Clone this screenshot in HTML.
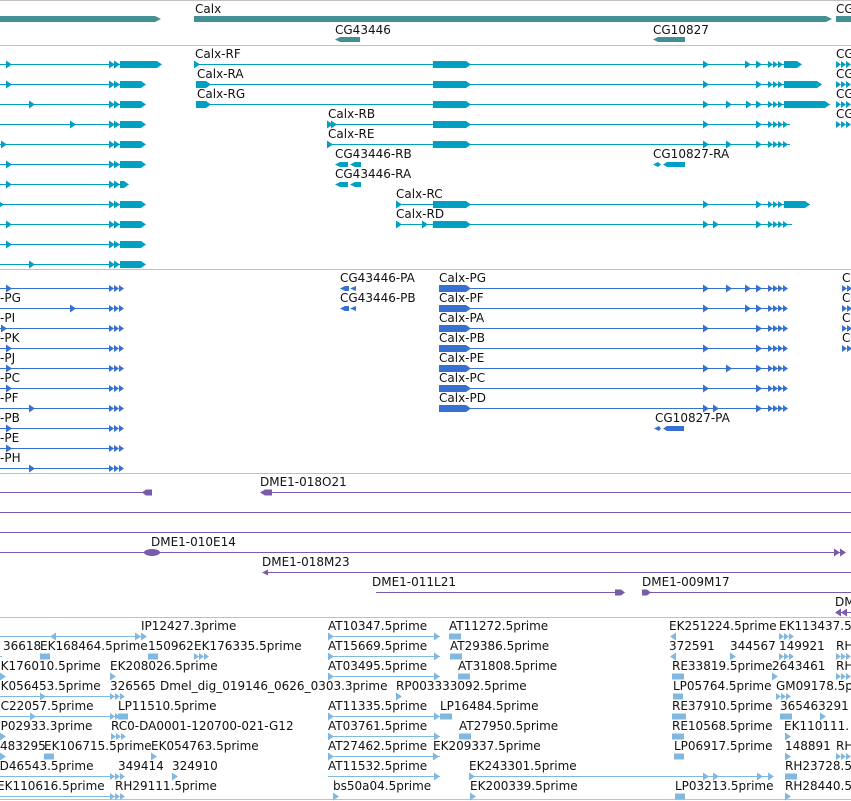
<!DOCTYPE html>
<html><head><meta charset="utf-8"><style>
html,body{margin:0;padding:0;background:#fff;width:851px;height:801px;overflow:hidden}
svg{display:block}
text{font-family:"DejaVu Sans","Liberation Sans",sans-serif;font-size:12px;fill:#111}
</style></head><body>
<svg width="851" height="801" xmlns="http://www.w3.org/2000/svg">
<defs>
<polygon id="ar" points="0,-4 6,0 0,4"/>
<polygon id="al" points="0,-4 -6,0 0,4"/>
<g id="a3"><polygon points="0,-3.5 5,0 0,3.5"/><polygon points="5,-3.5 10,0 5,3.5"/><polygon points="10,-3.5 15,0 10,3.5"/></g>
<g id="a4"><polygon points="0,-3.5 5,0 0,3.5"/><polygon points="5,-3.5 10,0 5,3.5"/><polygon points="10,-3.5 15,0 10,3.5"/><polygon points="15,-3.5 20,0 15,3.5"/></g>
</defs>
<!-- separators -->
<g stroke="#c0c0c0" stroke-width="1">
<line x1="0" y1="0.5" x2="851" y2="0.5"/><line x1="0" y1="45.5" x2="851" y2="45.5"/>
<line x1="0" y1="269.5" x2="851" y2="269.5"/><line x1="0" y1="473.5" x2="851" y2="473.5"/>
<line x1="0" y1="617.5" x2="851" y2="617.5"/><line x1="0" y1="799.5" x2="851" y2="799.5"/>
</g>

<!-- Track 1 genes -->
<g fill="#428f94">
<polygon points="0,16 155,16 161,19 155,22 0,22"/>
<polygon points="194,16 826,16 832,19 826,22 194,22"/>
<rect x="836" y="16" width="15" height="6"/>
<polygon points="335,39.5 340,37 360,37 360,42 340,42"/>
<polygon points="653,39.5 658,37 685,37 685,42 658,42"/>
</g>
<text x="195" y="13">Calx</text><text x="836" y="13">CG</text>
<text x="335" y="34">CG43446</text><text x="653" y="34">CG10827</text>

<!-- Track 2 transcripts -->
<g fill="#00a0c2" stroke="#00a0c2">
<g stroke-width="1">
<line x1="0" y1="64.5" x2="120" y2="64.5"/><line x1="0" y1="84.5" x2="120" y2="84.5"/>
<line x1="0" y1="104.5" x2="120" y2="104.5"/><line x1="0" y1="124.5" x2="120" y2="124.5"/>
<line x1="0" y1="144.5" x2="120" y2="144.5"/><line x1="0" y1="164.5" x2="120" y2="164.5"/>
<line x1="0" y1="184.5" x2="120" y2="184.5"/><line x1="0" y1="204.5" x2="120" y2="204.5"/>
<line x1="0" y1="224.5" x2="120" y2="224.5"/><line x1="0" y1="244.5" x2="120" y2="244.5"/>
<line x1="0" y1="264.5" x2="120" y2="264.5"/>
<line x1="194" y1="64.5" x2="800" y2="64.5"/><line x1="196" y1="84.5" x2="820" y2="84.5"/>
<line x1="196" y1="104.5" x2="830" y2="104.5"/><line x1="327" y1="124.5" x2="790" y2="124.5"/>
<line x1="327" y1="144.5" x2="790" y2="144.5"/><line x1="396" y1="204.5" x2="810" y2="204.5"/>
<line x1="396" y1="224.5" x2="792" y2="224.5"/>
</g>
<g stroke="none">
<!-- left exons -->
<polygon points="120,61 157,61 162,64.5 157,68 120,68"/>
<polygon points="120,81 141,81 146,84.5 141,88 120,88"/>
<polygon points="120,101 141,101 146,104.5 141,108 120,108"/>
<polygon points="120,121 141,121 146,124.5 141,128 120,128"/>
<polygon points="120,141 141,141 146,144.5 141,148 120,148"/>
<polygon points="120,161 141,161 146,164.5 141,168 120,168"/>
<polygon points="120,181 124,181 129,184.5 124,188 120,188"/>
<polygon points="120,201 141,201 146,204.5 141,208 120,208"/>
<polygon points="120,221 141,221 146,224.5 141,228 120,228"/>
<polygon points="120,241 141,241 146,244.5 141,248 120,248"/>
<polygon points="120,261 141,261 146,264.5 141,268 120,268"/>
<use href="#ar" x="109" y="64.5"/><use href="#ar" x="114" y="64.5"/><use href="#ar" x="109" y="84.5"/><use href="#ar" x="114" y="84.5"/>
<use href="#ar" x="109" y="104.5"/><use href="#ar" x="114" y="104.5"/><use href="#ar" x="109" y="124.5"/><use href="#ar" x="114" y="124.5"/>
<use href="#ar" x="109" y="144.5"/><use href="#ar" x="114" y="144.5"/><use href="#ar" x="109" y="164.5"/><use href="#ar" x="114" y="164.5"/>
<use href="#ar" x="109" y="184.5"/><use href="#ar" x="114" y="184.5"/><use href="#ar" x="109" y="204.5"/><use href="#ar" x="114" y="204.5"/>
<use href="#ar" x="109" y="224.5"/><use href="#ar" x="114" y="224.5"/><use href="#ar" x="109" y="244.5"/><use href="#ar" x="114" y="244.5"/>
<use href="#ar" x="109" y="264.5"/><use href="#ar" x="114" y="264.5"/>
<use href="#ar" x="6" y="64.5"/><use href="#ar" x="6" y="84.5"/><use href="#ar" x="29" y="104.5"/><use href="#ar" x="70" y="124.5"/>
<use href="#ar" x="1" y="144.5"/><use href="#ar" x="6" y="164.5"/><use href="#ar" x="6" y="184.5"/><use href="#ar" x="-2" y="204.5"/>
<use href="#ar" x="6" y="224.5"/><use href="#ar" x="6" y="244.5"/><use href="#ar" x="29" y="264.5"/>
<!-- right transcripts -->
<use href="#ar" x="194" y="64.5"/>
<polygon points="196,81 206,81 211,84.5 206,88 196,88"/><polygon points="196,101 206,101 211,104.5 206,108 196,108"/>
<use href="#ar" x="327" y="124.5"/><use href="#ar" x="331" y="124.5"/><use href="#ar" x="327" y="144.5"/>
<use href="#ar" x="396" y="204.5"/><use href="#ar" x="396" y="224.5"/><use href="#ar" x="422" y="224.5"/>
<polygon points="433,61 466,61 471,64.5 466,68 433,68"/><polygon points="433,81 466,81 471,84.5 466,88 433,88"/>
<polygon points="433,101 466,101 471,104.5 466,108 433,108"/><polygon points="433,121 466,121 471,124.5 466,128 433,128"/>
<polygon points="433,141 466,141 471,144.5 466,148 433,148"/><polygon points="433,201 466,201 471,204.5 466,208 433,208"/>
<polygon points="433,221 466,221 471,224.5 466,228 433,228"/>
<use href="#ar" x="703" y="64.5"/><use href="#ar" x="745" y="64.5"/><use href="#ar" x="756" y="64.5"/><use href="#a3" x="768" y="64.5"/>
<polygon points="784,61 797,61 802,64.5 797,68 784,68"/>
<use href="#ar" x="703" y="84.5"/><use href="#ar" x="756" y="84.5"/><use href="#a3" x="768" y="84.5"/>
<polygon points="784,81 817,81 822,84.5 817,88 784,88"/>
<use href="#ar" x="703" y="104.5"/><use href="#ar" x="726" y="104.5"/><use href="#ar" x="746" y="104.5"/><use href="#ar" x="756" y="104.5"/><use href="#a3" x="768" y="104.5"/>
<polygon points="784,101 825,101 830,104.5 825,108 784,108"/>
<use href="#ar" x="703" y="124.5"/><use href="#ar" x="756" y="124.5"/><use href="#a4" x="768" y="124.5"/>
<use href="#ar" x="703" y="144.5"/><use href="#ar" x="726" y="144.5"/><use href="#ar" x="756" y="144.5"/><use href="#a4" x="768" y="144.5"/>
<use href="#ar" x="703" y="204.5"/><use href="#ar" x="756" y="204.5"/><use href="#a3" x="768" y="204.5"/>
<polygon points="784,201 805,201 810,204.5 805,208 784,208"/>
<use href="#ar" x="703" y="224.5"/><use href="#ar" x="713" y="224.5"/><use href="#ar" x="756" y="224.5"/><use href="#a4" x="768" y="224.5"/>
<!-- CG43446 -->
<polygon points="335,164.5 340,162 348,162 348,167 340,167"/><polygon points="350,164.5 355,162 361,162 361,167 355,167"/>
<polygon points="335,184.5 340,182 348,182 348,187 340,187"/><polygon points="350,184.5 355,182 361,182 361,187 355,187"/>
<polygon points="653,164.5 658,162 661,164.5 658,167"/><polygon points="663,164.5 667,162 685,162 685,167 667,167"/>
<!-- right edge -->
<use href="#a3" x="836" y="64.5"/><use href="#a3" x="836" y="84.5"/><use href="#a3" x="836" y="104.5"/><use href="#a3" x="836" y="124.5"/>
</g>
</g>
<text x="195" y="58">Calx-RF</text><text x="197" y="78">Calx-RA</text><text x="197" y="98">Calx-RG</text>
<text x="328" y="118">Calx-RB</text><text x="328" y="138">Calx-RE</text>
<text x="335" y="158">CG43446-RB</text><text x="335" y="178">CG43446-RA</text><text x="653" y="158">CG10827-RA</text>
<text x="396" y="198">Calx-RC</text><text x="396" y="218">Calx-RD</text>
<text x="836" y="58">CG</text><text x="836" y="78">CG</text><text x="836" y="98">CG</text><text x="836" y="118">CG</text>

<!-- Track 3 proteins -->
<g fill="#3670d0" stroke="#3670d0">
<g stroke-width="1">
<line x1="0" y1="288.5" x2="112" y2="288.5"/><line x1="0" y1="308.5" x2="112" y2="308.5"/>
<line x1="0" y1="328.5" x2="112" y2="328.5"/><line x1="0" y1="348.5" x2="112" y2="348.5"/>
<line x1="0" y1="368.5" x2="112" y2="368.5"/><line x1="0" y1="388.5" x2="112" y2="388.5"/>
<line x1="0" y1="408.5" x2="112" y2="408.5"/><line x1="0" y1="428.5" x2="112" y2="428.5"/>
<line x1="0" y1="448.5" x2="112" y2="448.5"/><line x1="0" y1="468.5" x2="112" y2="468.5"/>
<line x1="439" y1="288.5" x2="786" y2="288.5"/><line x1="439" y1="308.5" x2="786" y2="308.5"/>
<line x1="439" y1="328.5" x2="786" y2="328.5"/><line x1="439" y1="348.5" x2="786" y2="348.5"/>
<line x1="439" y1="368.5" x2="786" y2="368.5"/><line x1="439" y1="388.5" x2="786" y2="388.5"/>
<line x1="439" y1="408.5" x2="786" y2="408.5"/>
</g>
<g stroke="none">
<use href="#a3" x="109" y="288.5"/><use href="#a3" x="109" y="308.5"/><use href="#a3" x="109" y="328.5"/><use href="#a3" x="109" y="348.5"/>
<use href="#a3" x="109" y="368.5"/><use href="#a3" x="109" y="388.5"/><use href="#a3" x="109" y="408.5"/><use href="#a3" x="109" y="428.5"/>
<use href="#a3" x="109" y="448.5"/><use href="#a3" x="109" y="468.5"/>
<use href="#ar" x="6" y="288.5"/><use href="#ar" x="70" y="308.5"/><use href="#ar" x="1" y="328.5"/><use href="#ar" x="6" y="348.5"/>
<use href="#ar" x="6" y="368.5"/><use href="#ar" x="6" y="388.5"/><use href="#ar" x="29" y="408.5"/><use href="#ar" x="6" y="428.5"/>
<use href="#ar" x="6" y="448.5"/><use href="#ar" x="29" y="468.5"/>
<polygon points="340,288.5 345,286 349,286 349,291 345,291"/><polygon points="350,288.5 356,286 356,291"/>
<polygon points="340,308.5 345,306 349,306 349,311 345,311"/><polygon points="350,308.5 356,306 356,311"/>
<polygon points="439,285 466,285 471,288.5 466,292 439,292"/><polygon points="439,305 466,305 471,308.5 466,312 439,312"/>
<polygon points="439,325 466,325 471,328.5 466,332 439,332"/><polygon points="439,345 466,345 471,348.5 466,352 439,352"/>
<polygon points="439,365 466,365 471,368.5 466,372 439,372"/><polygon points="439,385 466,385 471,388.5 466,392 439,392"/>
<polygon points="439,405 466,405 471,408.5 466,412 439,412"/>
<use href="#ar" x="703" y="288.5"/><use href="#ar" x="726" y="288.5"/><use href="#ar" x="745" y="288.5"/><use href="#ar" x="756" y="288.5"/><use href="#a4" x="768" y="288.5"/>
<use href="#ar" x="703" y="308.5"/><use href="#ar" x="745" y="308.5"/><use href="#ar" x="756" y="308.5"/><use href="#a4" x="768" y="308.5"/>
<use href="#ar" x="703" y="328.5"/><use href="#ar" x="756" y="328.5"/><use href="#a4" x="768" y="328.5"/>
<use href="#ar" x="703" y="348.5"/><use href="#ar" x="756" y="348.5"/><use href="#a4" x="768" y="348.5"/>
<use href="#ar" x="703" y="368.5"/><use href="#ar" x="726" y="368.5"/><use href="#ar" x="756" y="368.5"/><use href="#a4" x="768" y="368.5"/>
<use href="#ar" x="703" y="388.5"/><use href="#ar" x="756" y="388.5"/><use href="#a4" x="768" y="388.5"/>
<use href="#ar" x="703" y="408.5"/><use href="#ar" x="713" y="408.5"/><use href="#ar" x="756" y="408.5"/><use href="#a4" x="768" y="408.5"/>
<polygon points="654,428.5 659,426 661,428.5 659,431"/><polygon points="663,428.5 667,426 684,426 684,431 667,431"/>
<use href="#a3" x="842" y="288.5"/><use href="#a3" x="842" y="308.5"/><use href="#a3" x="842" y="328.5"/><use href="#a3" x="842" y="348.5"/>
</g>
</g>
<text x="0" y="302">-PG</text><text x="0" y="322">-PI</text><text x="0" y="342">-PK</text><text x="0" y="362">-PJ</text>
<text x="0" y="382">-PC</text><text x="0" y="402">-PF</text><text x="0" y="422">-PB</text><text x="0" y="442">-PE</text><text x="0" y="462">-PH</text>
<text x="340" y="282">CG43446-PA</text><text x="340" y="302">CG43446-PB</text>
<text x="439" y="282">Calx-PG</text><text x="439" y="302">Calx-PF</text><text x="439" y="322">Calx-PA</text><text x="439" y="342">Calx-PB</text>
<text x="439" y="362">Calx-PE</text><text x="439" y="382">Calx-PC</text><text x="439" y="402">Calx-PD</text>
<text x="655" y="422">CG10827-PA</text>
<text x="842" y="282">C</text><text x="842" y="302">C</text><text x="842" y="322">C</text><text x="842" y="342">C</text>

<!-- Track 4 clones -->
<g fill="#7a5aaa" stroke="#7a5aaa">
<g stroke-width="1">
<line x1="0" y1="492.5" x2="145" y2="492.5"/><line x1="266" y1="492.5" x2="851" y2="492.5"/>
<line x1="0" y1="512.5" x2="851" y2="512.5"/><line x1="0" y1="532.5" x2="851" y2="532.5"/>
<line x1="0" y1="552.5" x2="845" y2="552.5"/><line x1="266" y1="572.5" x2="851" y2="572.5"/>
<line x1="376" y1="592.5" x2="620" y2="592.5"/><line x1="645" y1="592.5" x2="851" y2="592.5"/>
<line x1="840" y1="612.5" x2="851" y2="612.5"/>
</g>
<g stroke="none">
<polygon points="142,492.5 146,489.5 152,489.5 152,495.5 146,495.5"/>
<polygon points="260,492.5 265,489.5 272,489.5 272,495.5 265,495.5"/>
<ellipse cx="152" cy="552.5" rx="8" ry="3.5"/>
<use href="#ar" x="834" y="552.5"/><use href="#ar" x="840" y="552.5"/>
<polygon points="262,572.5 268,569.5 268,575.5"/>
<polygon points="615,589.5 621,589.5 625,592.5 621,595.5 615,595.5"/>
<polygon points="642,589.5 647,589.5 651,592.5 647,595.5 642,595.5"/>
<use href="#al" x="841" y="612.5"/><use href="#al" x="847" y="612.5"/>
</g>
</g>
<text x="260" y="486">DME1-018O21</text><text x="151" y="546">DME1-010E14</text><text x="262" y="566">DME1-018M23</text>
<text x="372" y="586">DME1-011L21</text><text x="642" y="586">DME1-009M17</text><text x="835" y="606">DM</text>

<!-- Track 5 ESTs -->
<g fill="#80b8e0" stroke="#80b8e0">
<g stroke-width="1">
<line x1="0" y1="636.5" x2="145" y2="636.5"/><line x1="328" y1="636.5" x2="440" y2="636.5"/>
<line x1="0" y1="656.5" x2="2" y2="656.5"/><line x1="328" y1="656.5" x2="440" y2="656.5"/>
<line x1="328" y1="676.5" x2="440" y2="676.5"/>
<line x1="0" y1="696.5" x2="118" y2="696.5"/>
<line x1="0" y1="716.5" x2="118" y2="716.5"/><line x1="328" y1="716.5" x2="440" y2="716.5"/>
<line x1="328" y1="736.5" x2="440" y2="736.5"/>
<line x1="328" y1="756.5" x2="440" y2="756.5"/>
<line x1="0" y1="776.5" x2="118" y2="776.5"/><line x1="328" y1="776.5" x2="440" y2="776.5"/><line x1="469" y1="776.5" x2="772" y2="776.5"/>
<line x1="0" y1="796.5" x2="118" y2="796.5"/>
</g>
<g stroke="none">
<use href="#al" x="56" y="636.5"/><use href="#ar" x="135" y="636.5"/><use href="#ar" x="141" y="636.5"/>
<use href="#ar" x="328" y="636.5"/><use href="#ar" x="434" y="636.5"/><rect x="449" y="633.5" width="12" height="6"/>
<use href="#al" x="676" y="636.5"/><use href="#a3" x="779" y="636.5"/>
<rect x="40" y="653.5" width="10" height="6"/><rect x="148" y="653.5" width="10" height="6"/><use href="#a3" x="194" y="656.5"/>
<use href="#ar" x="328" y="656.5"/><use href="#ar" x="434" y="656.5"/><rect x="450" y="653.5" width="12" height="6"/>
<use href="#al" x="676" y="656.5"/><use href="#ar" x="730" y="656.5"/><use href="#a3" x="779" y="656.5"/><use href="#a3" x="836" y="656.5"/>
<use href="#ar" x="0" y="676.5"/><use href="#ar" x="110" y="676.5"/><use href="#ar" x="328" y="676.5"/><use href="#ar" x="434" y="676.5"/><rect x="458" y="673.5" width="12" height="6"/>
<rect x="672" y="673.5" width="12" height="6"/><use href="#ar" x="772" y="676.5"/><use href="#a3" x="836" y="676.5"/>
<use href="#ar" x="40" y="696.5"/><use href="#a3" x="110" y="696.5"/><use href="#ar" x="396" y="696.5"/>
<rect x="673" y="693.5" width="10" height="6"/><use href="#a3" x="776" y="696.5"/>
<use href="#ar" x="30" y="716.5"/><use href="#a3" x="110" y="716.5"/><rect x="118" y="713.5" width="10" height="6"/>
<use href="#ar" x="328" y="716.5"/><use href="#ar" x="434" y="716.5"/><rect x="440" y="713.5" width="12" height="6"/>
<rect x="672" y="713.5" width="14" height="6"/><rect x="780" y="713.5" width="12" height="6"/><use href="#ar" x="820" y="716.5"/>
<use href="#ar" x="0" y="736.5"/><use href="#a3" x="111" y="736.5"/><use href="#ar" x="328" y="736.5"/><use href="#ar" x="434" y="736.5"/>
<rect x="459" y="733.5" width="12" height="6"/><rect x="672" y="733.5" width="12" height="6"/><use href="#ar" x="785" y="736.5"/>
<use href="#ar" x="0" y="756.5"/><rect x="44" y="753.5" width="10" height="6"/><use href="#ar" x="151" y="756.5"/><use href="#ar" x="328" y="756.5"/>
<use href="#ar" x="433" y="756.5"/><rect x="674" y="753.5" width="10" height="6"/><use href="#ar" x="785" y="756.5"/><use href="#a3" x="836" y="756.5"/>
<use href="#a3" x="110" y="776.5"/><use href="#ar" x="172" y="776.5"/><use href="#ar" x="434" y="776.5"/>
<use href="#ar" x="469" y="776.5"/><use href="#ar" x="703" y="776.5"/><use href="#ar" x="713" y="776.5"/><use href="#ar" x="757" y="776.5"/><use href="#ar" x="768" y="776.5"/>
<rect x="785" y="773.5" width="12" height="6"/>
<use href="#a3" x="110" y="796.5"/><use href="#ar" x="333" y="796.5"/><use href="#ar" x="470" y="796.5"/><rect x="675" y="793.5" width="10" height="6"/><use href="#ar" x="785" y="796.5"/>
</g>
</g>
<g>
<text x="141" y="630">IP12427.3prime</text><text x="328" y="630">AT10347.5prime</text><text x="449" y="630">AT11272.5prime</text><text x="669" y="630">EK251224.5prime</text><text x="779" y="630">EK113437.5</text>
<text x="3" y="650">36618</text><text x="40" y="650">EK168464.5prime</text><text x="148" y="650">150962</text><text x="194" y="650">EK176335.5prime</text><text x="328" y="650">AT15669.5prime</text><text x="450" y="650">AT29386.5prime</text><text x="669" y="650">372591</text><text x="730" y="650">344567</text><text x="779" y="650">149921</text><text x="836" y="650">RH</text>
<text x="-7" y="670">EK176010.5prime</text><text x="110" y="670">EK208026.5prime</text><text x="328" y="670">AT03495.5prime</text><text x="458" y="670">AT31808.5prime</text><text x="672" y="670">RE33819.5prime</text><text x="772" y="670">2643461</text><text x="836" y="670">RH</text>
<text x="-7" y="690">EK056453.5prime</text><text x="110" y="690">326565</text><text x="160" y="690">Dmel_dig_019146_0626_0303.3prime</text><text x="396" y="690">RP003333092.5prime</text><text x="673" y="690">LP05764.5prime</text><text x="776" y="690">GM09178.5prime</text>
<text x="-7" y="710">EC22057.5prime</text><text x="118" y="710">LP11510.5prime</text><text x="328" y="710">AT11335.5prime</text><text x="440" y="710">LP16484.5prime</text><text x="672" y="710">RE37910.5prime</text><text x="780" y="710">365463291</text>
<text x="-7" y="730">EP02933.3prime</text><text x="111" y="730">RC0-DA0001-120700-021-G12</text><text x="328" y="730">AT03761.5prime</text><text x="459" y="730">AT27950.5prime</text><text x="672" y="730">RE10568.5prime</text><text x="784" y="730">EK110111.</text>
<text x="0" y="750">483295</text><text x="44" y="750">EK106715.5prime</text><text x="151" y="750">EK054763.5prime</text><text x="328" y="750">AT27462.5prime</text><text x="433" y="750">EK209337.5prime</text><text x="674" y="750">LP06917.5prime</text><text x="785" y="750">148891</text><text x="836" y="750">RH</text>
<text x="-7" y="770">LD46543.5prime</text><text x="118" y="770">349414</text><text x="172" y="770">324910</text><text x="328" y="770">AT11532.5prime</text><text x="469" y="770">EK243301.5prime</text><text x="785" y="770">RH23728.5</text>
<text x="-3" y="790">EK110616.5prime</text><text x="115" y="790">RH29111.5prime</text><text x="333" y="790">bs50a04.5prime</text><text x="470" y="790">EK200339.5prime</text><text x="675" y="790">LP03213.5prime</text><text x="785" y="790">RH28440.5</text>
</g>
</svg>
</body></html>
